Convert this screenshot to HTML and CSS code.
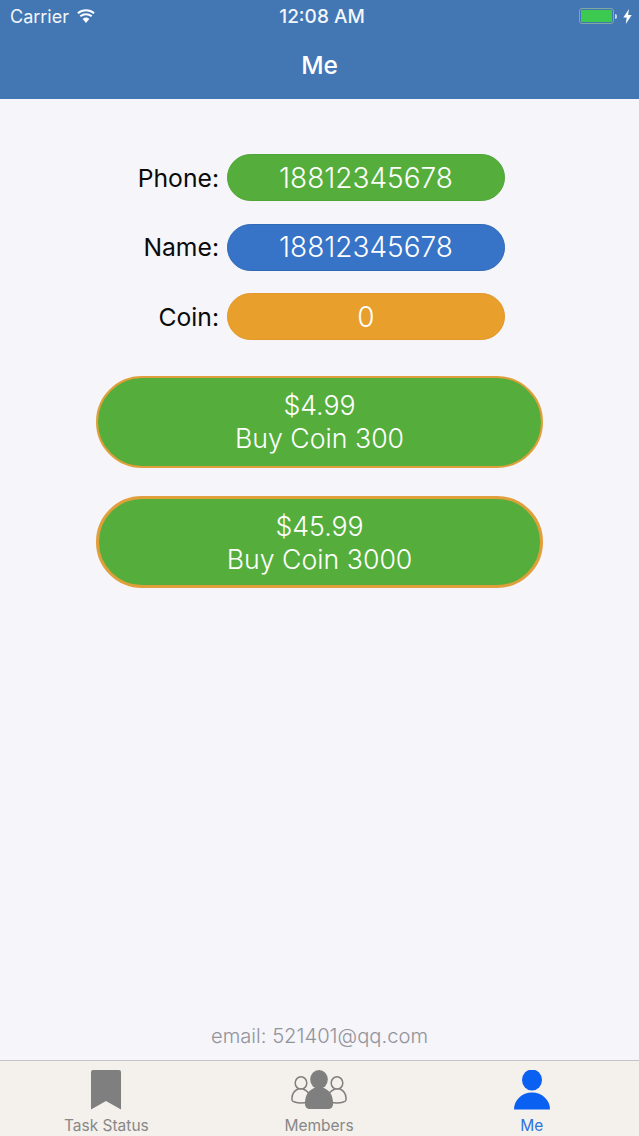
FILE: index.html
```html
<!DOCTYPE html>
<html lang="en">
<head>
<meta charset="utf-8">
<title>Me</title>
<link rel="stylesheet" href="styles.css">
</head>
<body>
<div class="app">
  <header class="top">
    <div class="status">
      <div class="status-left">
        <span>Carrier</span>
        <svg class="wifi" width="18" height="14" viewBox="0 0 18 14"><path d="M9 14 5.700 10a5 5 0 0 1 6.600 0Z" fill="#fff"/><path d="M3.300 7.300a8.700 8.700 0 0 1 11.400 0M.9 4.300a12.400 12.400 0 0 1 16.200 0" fill="none" stroke="#fff" stroke-width="2"/></svg>
      </div>
      <span class="clock">12:08 AM</span>
      <div class="status-right">
        <span class="battery"><span class="battery-fill"></span></span>
        <span class="battery-tip"></span>
        <svg class="bolt" width="9" height="15" viewBox="0 0 9 15"><path d="M6 0 .3 8.600h3.400L2.800 15 8.700 6H5.100Z" fill="#fff"/></svg>
      </div>
    </div>
    <h1 class="title">Me</h1>
  </header>
  <main class="content">
    <div class="rows">
      <div class="row"><span class="label">Phone:</span><span class="pill pill-green">18812345678</span></div>
      <div class="row"><span class="label">Name:</span><span class="pill pill-blue">18812345678</span></div>
      <div class="row"><span class="label">Coin:</span><span class="pill pill-orange">0</span></div>
    </div>
    <div class="buys">
      <div class="buy">$4.99<br>Buy Coin 300</div>
      <div class="buy buy-thick">$45.99<br>Buy Coin 3000</div>
    </div>
    <p class="email">email: 521401@qq.com</p>
  </main>
  <nav class="tabs">
    <div class="tab">
      <svg width="32" height="40" viewBox="0 0 32 40"><path d="M1 2a2 2 0 0 1 2-2h26a2 2 0 0 1 2 2v37.500L16 31 1 39.500Z" fill="#7f7f7f"/></svg>
      <span class="tab-label">Task Status</span>
    </div>
    <div class="tab">
      <svg width="58" height="40" viewBox="0 0 58 40">
        <g fill="#f4f0ec" stroke="#7f7f7f" stroke-width="1.500">
          <ellipse cx="11" cy="13" rx="5.800" ry="6.200"/>
          <path d="M2 28c0-5 2-7 6-9h5c4 1.500 7 4 7 9v2c0 1.500-4 3-9 3s-9-1.500-9-3Z"/>
          <ellipse cx="47" cy="13" rx="5.800" ry="6.200"/>
          <path d="M56 28c0-5-2-7-6-9h-5c-4 1.500-7 4-7 9v2c0 1.500 4 3 9 3s9-1.500 9-3Z"/>
        </g>
        <ellipse cx="29" cy="9.500" rx="8.800" ry="9.500" fill="#7f7f7f"/>
        <path d="M15 34c0-9 3-13 9-16h10c6 3 9 7 9 16 0 3-2 5-5 5H20c-3 0-5-2-5-5Z" fill="#7f7f7f"/>
      </svg>
      <span class="tab-label">Members</span>
    </div>
    <div class="tab tab-active">
      <svg width="36" height="40" viewBox="0 0 36 40"><ellipse cx="18" cy="10" rx="10" ry="10.500" fill="#0a60f0"/><path d="M0 39.500C0 30 8 22.500 18 22.500S36 30 36 39.500Z" fill="#0a60f0"/></svg>
      <span class="tab-label">Me</span>
    </div>
  </nav>
</div>
</body>
</html>
```
FILE: styles.css
```css
* { box-sizing: border-box; margin: 0; padding: 0; }
html, body { width: 639px; height: 1136px; overflow: hidden; }
body { font-family: "Inter", "Liberation Sans", sans-serif; background: #f5f5fa; }
.app { display: flex; flex-direction: column; height: 1136px; }
.top { height: 99px; background: #4377b3; color: #fff; flex: none; }
.status { height: 32px; padding: 0 7px 0 10px; display: flex; align-items: center; justify-content: space-between; position: relative; font-size: 18px; color: #f2f6fb; }
.status-left { display: flex; align-items: center; gap: 8px; }
.clock { position: absolute; left: 0; right: 0; text-align: center; font-weight: 500; font-size: 19px; padding-left: 5px; }
.status-right { display: flex; align-items: center; }
.battery { width: 35px; height: 16px; border: 1px solid #7fa8a0; border-radius: 3px; padding: 1px; display: block; }
.battery-fill { display: block; width: 100%; height: 100%; background: #3dc94f; border-radius: 1px; }
.battery-tip { width: 2px; height: 5px; background: #c9d7e6; margin-left: 1px; margin-right: 6px; border-radius: 0 2px 2px 0; }
.title { font-size: 24.500px; font-weight: 500; text-align: center; line-height: 32px; margin-top: 17px; }
.content { flex: 1; display: flex; flex-direction: column; align-items: center; padding-top: 55px; }
.rows { display: flex; flex-direction: column; gap: 22.500px; align-self: flex-start; }
.row { display: grid; grid-template-columns: 219px 278px; column-gap: 8px; align-items: center; }
.label { text-align: right; font-size: 24.700px; color: #0a0a0a; }
.pill { height: 47px; border-radius: 23.500px; border: 1px solid; color: #fff; font-size: 28px; font-weight: 300; display: flex; align-items: center; justify-content: center; }
.pill-green { background: #55ae3c; border-color: #4ea536; }
.pill-blue { background: #3773c6; border-color: #3069b6; }
.pill-orange { background: #e89f2c; border-color: #e2982a; }
.buys { display: flex; flex-direction: column; gap: 28px; margin-top: 36px; align-items: center; }
.buy { width: 447px; height: 92px; border-radius: 46px; background: #55ae3c; border: 2px solid #e09f3a; color: #fff; font-size: 26.700px; font-weight: 300; line-height: 33px; text-align: center; display: flex; align-items: center; justify-content: center; }
.buy-thick { border-width: 3px; padding-top: 1px; }
.email { margin-top: auto; margin-bottom: 12px; font-size: 20.200px; font-weight: 300; color: #93939b; }
.tabs { height: 76px; flex: none; background: #f4f0ec; border-top: 1px solid #c4c4c6; display: grid; grid-template-columns: repeat(3, 1fr); padding: 9px 1px 0 0; }
.tab { display: flex; flex-direction: column; align-items: center; gap: 6px; color: #888; }
.tab-active { color: #2f73e0; }
.tab-label { font-size: 15.500px; line-height: 20px; }
```
